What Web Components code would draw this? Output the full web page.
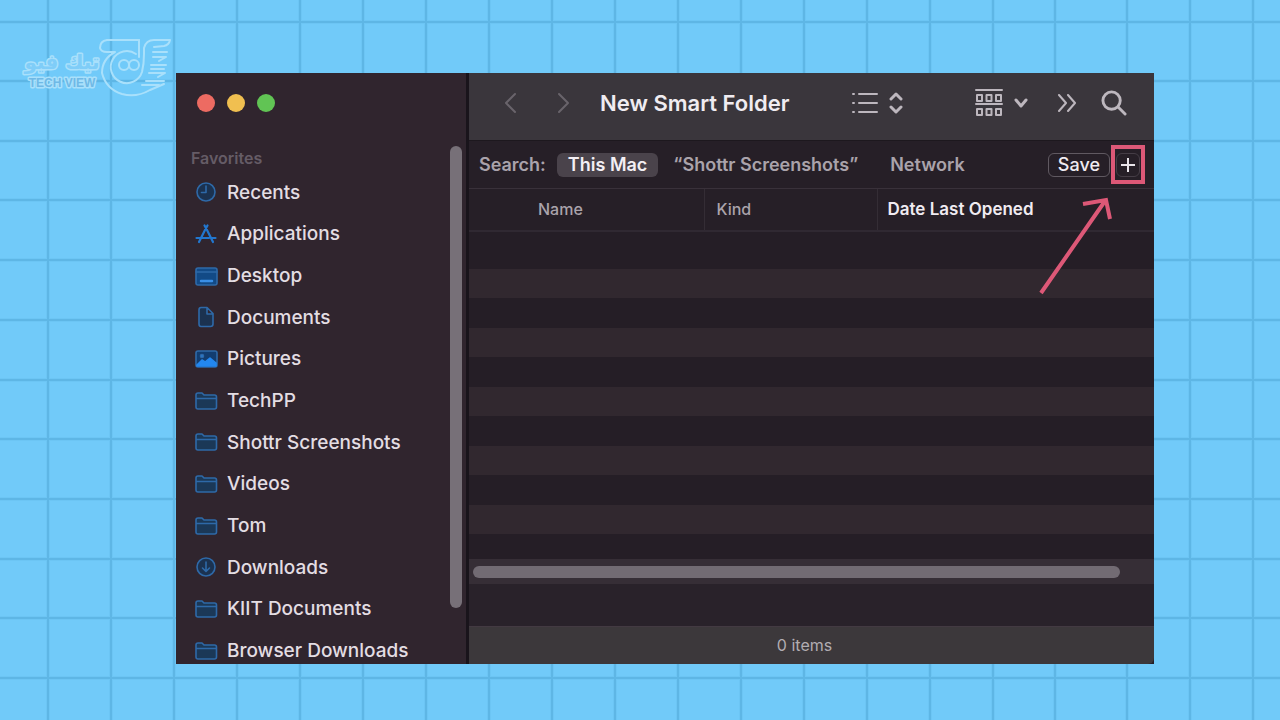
<!DOCTYPE html>
<html lang="en">
<head>
<meta charset="utf-8">
<title>New Smart Folder</title>
<style>
  html, body { margin: 0; height: 100%; }
  body { background: #71caf9; font-family: Inter, "Noto Sans", sans-serif; overflow: hidden; }
</style>
</head>
<body>
<desk-board>
  <brand-mark slot="brand"></brand-mark>
  <finder-window>
    <finder-sidebar slot="sidebar" heading="Favorites">
      <side-item icon="clock">Recents</side-item>
      <side-item icon="apps">Applications</side-item>
      <side-item icon="desktop">Desktop</side-item>
      <side-item icon="doc">Documents</side-item>
      <side-item icon="picture">Pictures</side-item>
      <side-item icon="folder">TechPP</side-item>
      <side-item icon="folder">Shottr Screenshots</side-item>
      <side-item icon="folder">Videos</side-item>
      <side-item icon="folder">Tom</side-item>
      <side-item icon="download">Downloads</side-item>
      <side-item icon="folder">KIIT Documents</side-item>
      <side-item icon="folder">Browser Downloads</side-item>
    </finder-sidebar>
    <finder-toolbar>New Smart Folder</finder-toolbar>
    <search-bar></search-bar>
    <file-list></file-list>
    <status-bar>0 items</status-bar>
  </finder-window>
</desk-board>

<script>
const define = (name, html) => customElements.define(name, class extends HTMLElement {
  connectedCallback() {
    if (this.shadowRoot) return;
    this.attachShadow({ mode: "open" }).innerHTML =
      `<style>:host,*{box-sizing:border-box} button{font:inherit;color:inherit;background:none;border:0;padding:0;margin:0;display:block} svg{display:block}</style>`
      + (typeof html === "function" ? html(this) : html);
  }
});

/* Squared-paper backdrop */
const columns = [48, 111, 174, 237, 300, 363, 426, 489, 552, 615, 678, 741, 804, 867, 930, 993, 1055, 1127, 1190, 1253];
const lines = [22, 81, 141, 200, 260, 320, 380, 439, 499, 559, 618, 678];
const ruling = columns.map(x => `M${x} 0V720`).join("") + lines.map(y => `M0 ${y}H1280`).join("");
const grid = `<svg class="paper" viewBox="0 0 1280 720" preserveAspectRatio="none" aria-hidden="true" fill="none">
  <path d="${ruling}" stroke="#67bfee" stroke-width="4" opacity=".4"/>
  <path d="${ruling}" stroke="#55acda" stroke-width="2" opacity=".6"/></svg>`;

define("desk-board", `<style>
  :host{display:flex;position:relative;height:100vh;padding:73px 126px 56px 176px}
  .paper{position:absolute;inset:0;width:100%;height:100%}
  ::slotted(finder-window){flex:1;position:relative}
</style>${grid}<slot name="brand"></slot><slot></slot>`);

define("brand-mark", `<style>
  :host{position:absolute;left:20px;top:34px}
  text{font-weight:700;paint-order:stroke;stroke-linejoin:round}
  .ar{font-family:"DejaVu Sans",sans-serif;font-size:20px}
  .en{font-family:"Liberation Sans",sans-serif;font-size:12px}
</style>
<svg width="156" height="68" viewBox="0 0 156 68" fill="none" stroke="#a9e0fb" stroke-width="2" stroke-linecap="round" stroke-linejoin="round" role="img" aria-label="Tech View">
  <text class="ar" x="42" y="35" text-anchor="middle" fill="#7fcdf8" stroke-width="3">تيك فيو</text>
  <text class="en" x="42" y="53" text-anchor="middle" fill="#6fb9e6" stroke-width="3">TECH VIEW</text>
  <path d="M119 6H87Q80 7 80 14Q81 18 87 18H95Q82 25 82 39Q86 55 102 60Q116 64 130 56L144 50"/>
  <path d="M119 6V23"/>
  <path d="M116 20A16 16 0 1 0 122 38Q124 30 124 20V14Q126 6 134 6H150Q149 11 144 12L134 13"/>
  <circle cx="104" cy="31" r="5"/><circle cx="114" cy="31" r="5"/>
  <path d="M133 18H147M133 23H146L139 27M131 31H146M131 35H144M129 39H145L138 43M126 47H144M122 51H139"/>
</svg>`);

define("finder-window", `<style>
  :host{display:grid;grid-template-columns:293px minmax(0,1fr);grid-template-rows:minmax(0,1fr);min-width:0;min-height:0;background:#261f27;overflow:hidden}
  main{display:flex;flex-direction:column;min-width:0;min-height:0}
</style><slot name="sidebar"></slot><main><slot></slot></main>`);

define("finder-sidebar", host => `<style>
  :host{display:grid;grid-template-columns:minmax(0,1fr) 12px;grid-template-rows:60px minmax(0,1fr);padding-right:4px;background:#30252e;border-right:3px solid #19141b;overflow:hidden;min-height:0}
  .lights{grid-column:1/-1;display:flex;gap:12px;align-items:center;padding:0 21px}
  .lights button{width:18px;height:18px;border-radius:50%}
  nav{padding:15px 0 0 15px;min-width:0}
  h2{margin:0;font-size:16px;line-height:20px;font-weight:600;color:#655c66}
  .items{display:grid;grid-auto-rows:1fr;height:500px;margin-top:4px}
  .thumb{height:462px;margin-top:13px;border-radius:6px;background:#777078}
</style>
<div class="lights"><button aria-label="Close" style="background:#ed6b62"></button><button aria-label="Minimise" style="background:#f0bf50"></button><button aria-label="Zoom" style="background:#61c454"></button></div>
<nav><h2>${host.getAttribute("heading")}</h2><div class="items"><slot></slot></div></nav><div class="thumb"></div>`);

const icons = {
  clock: `<circle cx="12" cy="12" r="9" fill="#1b3250"/><path d="M12 6V12.500H7.500"/>`,
  apps: `<path d="M10.500 3.500L13 8L19 20M13.500 3.500L11 8L5 20M2.500 16H15M18 16H21.500" stroke="#2277cf" stroke-width="2.200"/>`,
  desktop: `<rect x="2" y="4" width="21" height="17" rx="2" fill="#124a86"/><path d="M2 8H23" /><path d="M7 17H18" stroke="#3a8fe6" stroke-width="2.500"/>`,
  doc: `<path d="M7 2.500H13L19 8.500V19Q19 21.500 16.500 21.500H7Q5 21.500 5 19V5Q5 2.500 7 2.500ZM13 3V9H19" fill="#1b3250"/>`,
  picture: `<rect x="2" y="4" width="21" height="16" rx="2" fill="#123d70"/><path d="M3 18L8 13L11 15L16 11L22 16V19H3Z" fill="#2387ef" stroke="#2387ef"/><circle cx="8" cy="9" r="1.500" fill="#2387ef"/>`,
  folder: `<path d="M2 18V6Q2 4 4 4H8L10 6H20.500Q22.500 6 22.500 8V18Q22.500 20 20.500 20H4Q2 20 2 18ZM2 9.500H22.500" fill="#1b3857"/>`,
  download: `<circle cx="12" cy="12" r="9" fill="#1b3250"/><path d="M12 7V16M8.500 13L12 16.500L15.500 13"/>`
};
define("side-item", host => `<style>
  :host{display:flex;align-items:center;min-width:0}
  a{display:flex;align-items:center;gap:8px;padding-left:3px;color:#e3dde3;text-decoration:none;font-size:19px;line-height:24px;font-weight:500;white-space:nowrap}
  svg{width:25px;height:25px}
</style><a href="#"><svg viewBox="0 0 25 25" fill="none" stroke="#2e69a8" stroke-width="1.600" stroke-linejoin="round" stroke-linecap="round" aria-hidden="true">${icons[host.getAttribute("icon")]}</svg><slot></slot></a>`);

define("finder-toolbar", `<style>
  :host{display:flex;align-items:center;height:68px;padding:0 27px 8px 34px;background:#3a363c;border-bottom:1px solid #1d181e;color:#bdb7be}
  svg{fill:none;stroke:currentColor;stroke-width:2;stroke-linecap:round;stroke-linejoin:round}
  .nav{display:flex;gap:38px;color:#69646b}
  h1{margin:0 auto 0 29px;font-size:22px;line-height:28px;font-weight:600;color:#f0ecf1;white-space:nowrap}
  .view,.group{display:flex;gap:11px;align-items:center}
  .group{margin:0 29px 0 72px}
  .find{margin-left:24px}
  .bold{stroke-width:3}
</style>
<div class="nav">
  <button aria-label="Back"><svg width="15" height="24" viewBox="0 0 15 24"><path d="M12 3L3 12L12 21"/></svg></button>
  <button aria-label="Forward"><svg width="15" height="24" viewBox="0 0 15 24"><path d="M3 3L12 12L3 21"/></svg></button>
</div>
<h1><slot></slot></h1>
<button class="view" aria-label="List view">
  <svg width="27" height="22" viewBox="0 0 27 22"><path d="M2 2H3M2 11H3M2 20H3M8 2H26M8 11H26M8 20H26"/></svg>
  <svg class="bold" width="14" height="22" viewBox="0 0 14 22"><path d="M2 7L7 2L12 7M2 15L7 20L12 15"/></svg>
</button>
<button class="group" aria-label="Group items">
  <svg width="28" height="28" viewBox="0 0 28 28"><path d="M1 1H27M1 15H27"/><path d="M2 6H7V12H2ZM11.500 6H16.500V12H11.500ZM21 6H26V12H21ZM2 20H7V26H2ZM11.500 20H16.500V26H11.500ZM21 20H26V26H21Z"/></svg>
  <svg class="bold" width="14" height="10" viewBox="0 0 14 10"><path d="M2 2L7 8L12 2"/></svg>
</button>
<button aria-label="More"><svg width="20" height="18" viewBox="0 0 20 18"><path d="M2 1L9 9L2 17M11 1L18 9L11 17"/></svg></button>
<button class="find" aria-label="Search"><svg class="bold" width="26" height="26" viewBox="0 0 27 27"><circle cx="11" cy="11" r="9"/><path d="M18 18L25 25"/></svg></button>`);

define("search-bar", `<style>
  :host{display:flex;align-items:center;height:48px;padding:0 9px 0 10px;border-bottom:1px solid #39313a;color:#aaa3ab;font-size:18px;line-height:24px;font-weight:600;white-space:nowrap;background:#261f27}
  .on{margin:0 15px 0 11px;padding:0 11px;border-radius:6px;background:#4a434b;color:#f3eff4}
  .net{margin:0 auto 0 32px}
  .save{height:24px;line-height:22px;padding:0 9px;border:1px solid #605961;border-radius:6px;color:#f0ebf1;font-weight:500}
  .mark{position:relative;width:34px;height:39px;margin-left:1px;border:4px solid #dd5877;display:flex;align-items:center;justify-content:center}
  .add{color:#e9e4ea;border:1px solid #453d46;border-radius:6px;width:24px;height:24px;display:flex;align-items:center;justify-content:center}
  .arrow{position:absolute;right:28px;top:47px;fill:none;stroke:#dd5877;stroke-width:4}
</style>
<span>Search:</span>
<button class="on">This Mac</button>
<button>“Shottr Screenshots”</button>
<button class="net">Network</button>
<button class="save">Save</button>
<span class="mark"><button class="add" aria-label="Add rule"><svg width="14" height="14" viewBox="0 0 14 14" fill="none" stroke="currentColor" stroke-width="2"><path d="M7 0V14M0 7H14"/></svg></button>
<svg class="arrow" width="76" height="100" viewBox="0 0 76 100" aria-hidden="true"><path d="M4 97L68 5M46 8L69 4L73 23"/></svg></span>`);

define("file-list", `<style>
  :host{display:flex;flex-direction:column;flex:1;min-height:0}
  table{width:100%;border-collapse:collapse;table-layout:fixed}
  .name{width:235px}.kind{width:173px}
  th{height:42px;padding:0 0 2px 12px;text-align:left;font-size:16px;line-height:22px;font-weight:500;color:#aaa3ab;border-bottom:2px solid #302932;white-space:nowrap}
  th:first-child{padding-left:69px}
  th+th{border-left:1px solid #342d35}
  th.sorted{padding-left:10px;font-size:17px;color:#f0ebf1;font-weight:600}
  .rows{flex:1;background:#251e26 repeating-linear-gradient(#251e26 0 30px,#31282f 30px 59px) 0 7px no-repeat}
  .track{padding:7px 34px 6px 4px;background:#362e36}
  .thumb{height:12px;border-radius:6px;background:#726b73}
  .foot{height:42px;background:#29222a}
</style>
<table><thead><tr><th class="name">Name</th><th class="kind">Kind</th><th class="sorted">Date Last Opened</th></tr></thead></table>
<div class="rows"></div><div class="track"><div class="thumb"></div></div><div class="foot"></div>`);

define("status-bar", `<style>
  :host{display:flex;align-items:center;justify-content:center;height:38px;padding:0 14px 2px 0;background:#3c383b;border-top:1px solid #433a42;border-bottom-right-radius:6px;color:#b2adb2;font-size:16px;line-height:20px}
</style><slot></slot>`);
</script>
</body>
</html>
